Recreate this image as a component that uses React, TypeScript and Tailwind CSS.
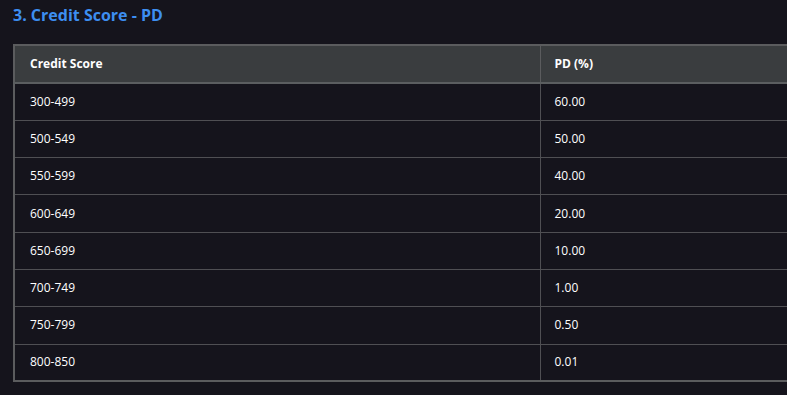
import React from "react";

const rows: [string, string][] = [
  ["300-499", "60.00"],
  ["500-549", "50.00"],
  ["550-599", "40.00"],
  ["600-649", "20.00"],
  ["650-699", "10.00"],
  ["700-749", "1.00"],
  ["750-799", "0.50"],
  ["800-850", "0.01"],
];

export default function App() {
  return (
    <div
      className="w-[787px] h-[395px] overflow-hidden bg-[#15141c] text-white"
      style={{ fontFamily: '"Open Sans", "Noto Sans", sans-serif' }}
    >
      <div className="pl-[13px] pt-[3px]">
        <h2 className="text-[16px] leading-[24px] font-bold text-[#3d8ef0] h-[41px]">
          3. Credit Score - PD
        </h2>
        <table className="w-[1052px] border-collapse border-2 border-[#5b5c5e] text-[12px] table-fixed">
          <thead>
            <tr className="bg-[#3a3d3f] border-b-2 border-[#5b5e60]">
              <th className="w-[526px] h-[38px] px-[15px] text-left font-bold border-r border-[#5b5c5e]">
                Credit Score
              </th>
              <th className="h-[38px] px-[14px] text-left font-bold">PD (%)</th>
            </tr>
          </thead>
          <tbody>
            {rows.map(([a, b]) => (
              <tr key={a} className="border-b border-[#4f4f53]">
                <td className="h-[37.3px] px-[15px] border-r border-[#4f4f53]">{a}</td>
                <td className="h-[37.3px] px-[14px]">{b}</td>
              </tr>
            ))}
          </tbody>
        </table>
      </div>
    </div>
  );
}
